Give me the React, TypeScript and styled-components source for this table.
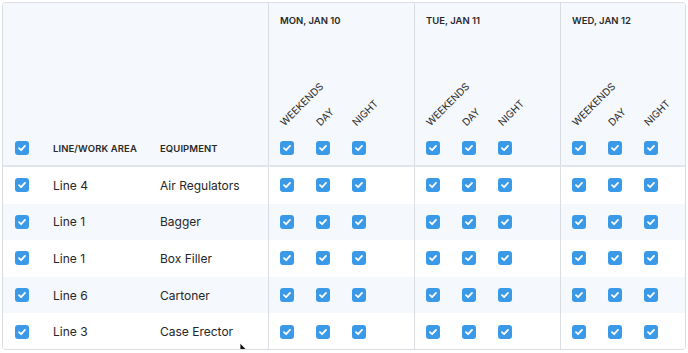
import React from 'react';
import styled, { createGlobalStyle } from 'styled-components';

const GlobalStyle = createGlobalStyle`
  html, body {
    margin: 0;
    padding: 0;
    background: #ffffff;
  }
  body {
    font-family: Inter, "Noto Sans", "Liberation Sans", sans-serif;
    color: #262626;
  }
`;

const COLUMNS = '38px 107px 120px repeat(3, 146px)';

const Frame = styled.div`
  position: relative;
  margin: 2px;
  height: 348px;
  box-sizing: border-box;
  border: 1px solid #dadde2;
  border-radius: 4px;
  overflow: hidden;
  background: #fff;
`;

const HeadRow = styled.div`
  display: grid;
  grid-template-columns: ${COLUMNS};
  height: 164px;
  box-sizing: border-box;
  background: #f5f8fd;
  border-bottom: 2px solid #e2e5ea;
`;

const HeadCell = styled.div`
  display: flex;
  align-items: flex-end;
  padding: 0 0 10px 12px;
`;

const HeadLabel = styled.div`
  height: 14px;
  display: flex;
  align-items: center;
  font-size: 9.5px;
  font-weight: 600;
  letter-spacing: 0.1px;
  text-transform: uppercase;
  white-space: nowrap;
  color: #2a2a2a;
`;

const DayHead = styled.div`
  display: flex;
  flex-direction: column;
  justify-content: space-between;
  border-left: 1px solid #dadde2;
  padding: 11px 0 10px 11px;
`;

const DayTitle = styled.div`
  font-size: 9.5px;
  line-height: 14px;
  font-weight: 600;
  text-transform: uppercase;
  color: #2a2a2a;
  white-space: nowrap;
`;

const Shifts = styled.div`
  display: flex;
  gap: 22px;
`;

const Shift = styled.div`
  width: 14px;
  display: flex;
  flex-direction: column;
`;

const ShiftLabel = styled.div`
  height: 12px;
  line-height: 12px;
  margin: 0 0 13px 0;
  font-size: 10px;
  text-transform: uppercase;
  white-space: nowrap;
  color: #2a2a2a;
  transform: translateX(6px) rotate(-45deg);
  transform-origin: 0 100%;
`;

const Row = styled.div<{ $alt?: boolean }>`
  display: grid;
  grid-template-columns: ${COLUMNS};
  height: 36.6px;
  background: ${(p) => (p.$alt ? '#f5f8fd' : '#ffffff')};
`;

const Cell = styled.div`
  display: flex;
  align-items: center;
  padding-left: 12px;
  font-size: 12px;
  white-space: nowrap;
  color: #262626;
`;

const DayCell = styled.div`
  display: flex;
  align-items: center;
  gap: 22px;
  padding-left: 11px;
  border-left: 1px solid #dadde2;
`;

const Box = styled.span`
  display: inline-flex;
  align-items: center;
  justify-content: center;
  width: 14px;
  height: 14px;
  border-radius: 3px;
  background: #3b9ae8;
  flex-shrink: 0;
`;

const Pointer = styled.svg`
  position: absolute;
  left: 236px;
  top: 339px;
`;

const Check = () => (
  <Box>
    <svg width="10" height="10" viewBox="0 0 10 10">
      <path d="M2 5.2 L4.1 7.2 L8 2.9" fill="none" stroke="#fff" strokeWidth="1.8" strokeLinecap="round" strokeLinejoin="round" />
    </svg>
  </Box>
);

const days = ['Mon, Jan 10', 'Tue, Jan 11', 'Wed, Jan 12'];
const shifts = ['Weekends', 'Day', 'Night'];

const rows = [
  { line: 'Line 4', equipment: 'Air Regulators' },
  { line: 'Line 1', equipment: 'Bagger' },
  { line: 'Line 1', equipment: 'Box Filler' },
  { line: 'Line 6', equipment: 'Cartoner' },
  { line: 'Line 3', equipment: 'Case Erector' },
];

export default function App() {
  return (
    <>
      <GlobalStyle />
      <Frame>
        <HeadRow>
          <HeadCell>
            <HeadLabel>
              <Check />
            </HeadLabel>
          </HeadCell>
          <HeadCell>
            <HeadLabel>Line/Work Area</HeadLabel>
          </HeadCell>
          <HeadCell>
            <HeadLabel>Equipment</HeadLabel>
          </HeadCell>
          {days.map((d) => (
            <DayHead key={d}>
              <DayTitle>{d}</DayTitle>
              <Shifts>
                {shifts.map((s) => (
                  <Shift key={s}>
                    <ShiftLabel>{s}</ShiftLabel>
                    <Check />
                  </Shift>
                ))}
              </Shifts>
            </DayHead>
          ))}
        </HeadRow>
        {rows.map((r, i) => (
          <Row key={i} $alt={i % 2 === 1}>
            <Cell>
              <Check />
            </Cell>
            <Cell>{r.line}</Cell>
            <Cell>{r.equipment}</Cell>
            {days.map((d) => (
              <DayCell key={d}>
                {shifts.map((s) => (
                  <Check key={s} />
                ))}
              </DayCell>
            ))}
          </Row>
        ))}
        <Pointer width="10" height="14" viewBox="0 0 10 14">
          <path d="M1 1 L1 12 L3.6 9.6 L5.4 13.4 L7 12.7 L5.3 9 L8.8 9 Z" fill="#111" stroke="#fff" strokeWidth="0.8" />
        </Pointer>
      </Frame>
    </>
  );
}
